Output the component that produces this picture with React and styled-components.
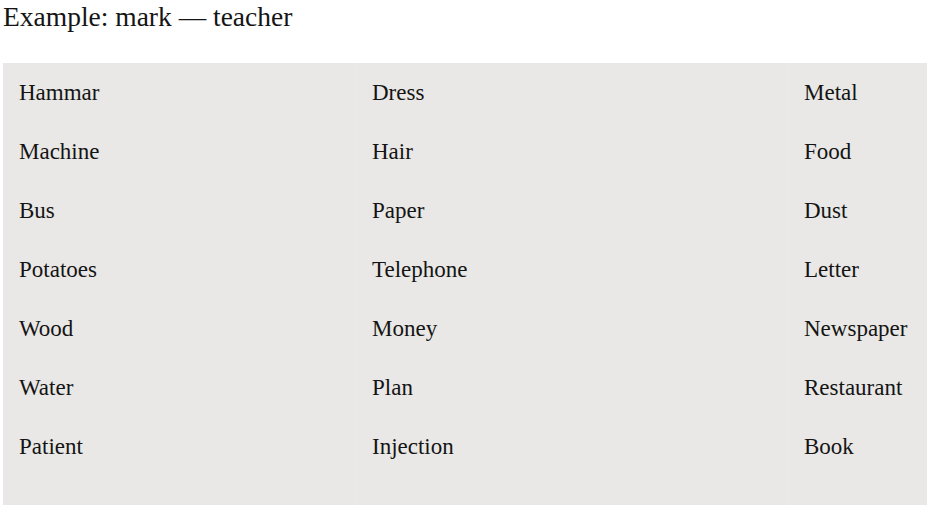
import React from 'react';
import styled, { createGlobalStyle } from 'styled-components';

const GlobalStyle = createGlobalStyle`
  body {
    margin: 0;
    background: #ffffff;
    font-family: "Liberation Serif", "Times New Roman", serif;
    color: #141414;
  }
`;

const Page = styled.div`
  padding-left: 3px;
  width: 924px;
`;

const Title = styled.h2`
  margin: 0 0 29px;
  font-size: 27.5px;
  line-height: 34px;
  font-weight: normal;
  color: #151515;
`;

const WordTable = styled.div`
  display: grid;
  grid-template-columns: 352px 432px 1fr;
  background: #e9e8e6;
`;

const Column = styled.div`
  display: flex;
  flex-direction: column;
  padding: 0 0 29px 16px;
  border-left: ${(p) => (p.$first ? 'none' : '1px solid #ecebe9')};
`;

const Word = styled.div`
  height: 59px;
  line-height: 59px;
  font-size: 23px;
  white-space: nowrap;
`;

const columns = [
  ['Hammar', 'Machine', 'Bus', 'Potatoes', 'Wood', 'Water', 'Patient'],
  ['Dress', 'Hair', 'Paper', 'Telephone', 'Money', 'Plan', 'Injection'],
  ['Metal', 'Food', 'Dust', 'Letter', 'Newspaper', 'Restaurant', 'Book']
];

export default function App() {
  return (
    <Page>
      <GlobalStyle />
      <Title>Example: mark — teacher</Title>
      <WordTable>
        {columns.map((col, i) => (
          <Column key={i} $first={i === 0}>
            {col.map((w) => (
              <Word key={w}>{w}</Word>
            ))}
          </Column>
        ))}
      </WordTable>
    </Page>
  );
}
